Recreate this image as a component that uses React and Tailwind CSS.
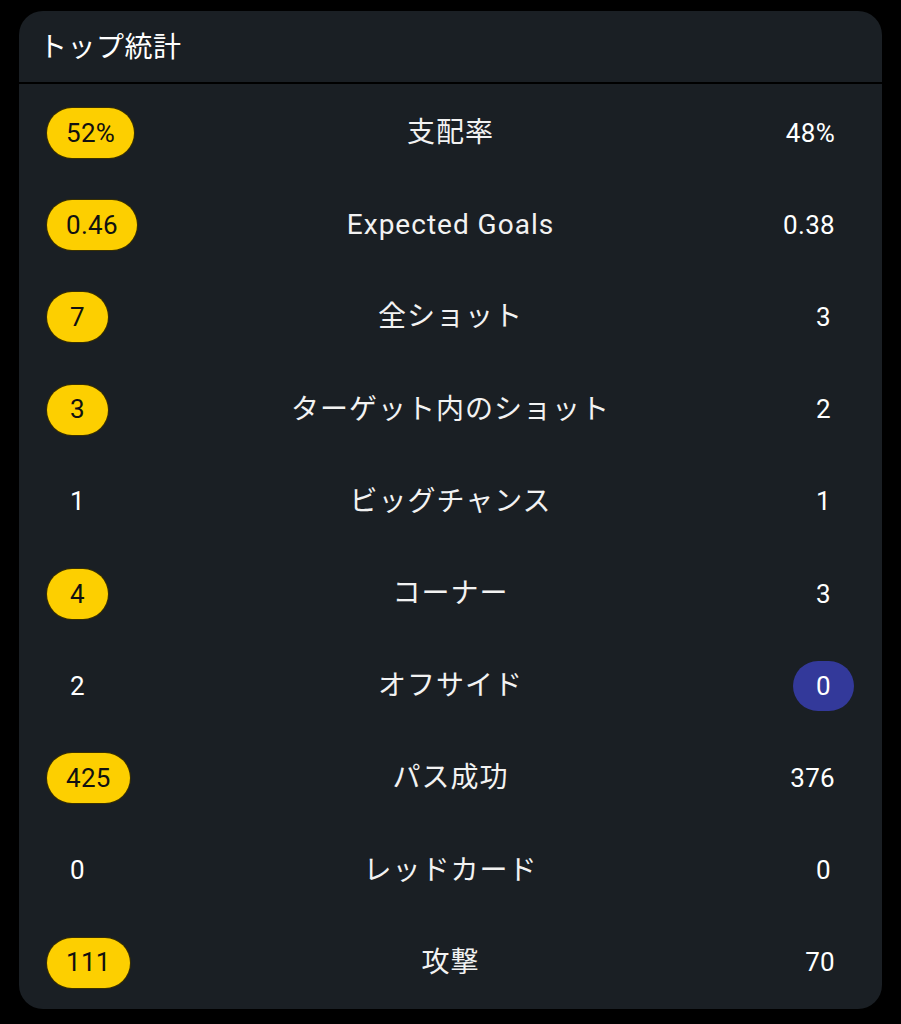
import React from 'react';

const stats = [
  { home: '52%', label: '支配率', away: '48%', win: 'home' },
  { home: '0.46', label: 'Expected Goals', away: '0.38', win: 'home' },
  { home: '7', label: '全ショット', away: '3', win: 'home' },
  { home: '3', label: 'ターゲット内のショット', away: '2', win: 'home' },
  { home: '1', label: 'ビッグチャンス', away: '1', win: null },
  { home: '4', label: 'コーナー', away: '3', win: 'home' },
  { home: '2', label: 'オフサイド', away: '0', win: 'away' },
  { home: '425', label: 'パス成功', away: '376', win: 'home' },
  { home: '0', label: 'レッドカード', away: '0', win: null },
  { home: '111', label: '攻撃', away: '70', win: 'home' },
];

const Value = ({ value, variant }) => {
  let colors = 'text-white';
  if (variant === 'home') colors = 'bg-[#fdcf00] text-[#111] ring-1 ring-[#3a3000]';
  if (variant === 'away') colors = 'bg-[#33399a] text-white';
  return (
    <span
      className={`inline-flex h-[50px] min-w-[61px] items-center justify-center rounded-full px-[19px] text-[26px] tracking-[0.3px] ${colors}`}
    >
      {value}
    </span>
  );
};

export default function App() {
  return (
    <div
      className="min-h-screen bg-black pl-[19px] pt-[11px]"
      style={{ fontFamily: 'Roboto, "Noto Sans CJK JP", sans-serif' }}
    >
      <div className="flex h-[998px] w-[863px] flex-col overflow-hidden rounded-[24px] bg-[#1a1f24]">
        <div className="flex h-[71px] items-center px-[20px] pt-[2px] text-[28px] tracking-[0.5px] text-white">
          トップ統計
        </div>
        <div className="h-[2px] bg-black" />
        <div className="grid flex-1 grid-rows-10 pt-[3px]">
          {stats.map((s) => (
            <div key={s.label} className="grid grid-cols-[1fr_auto_1fr] items-center px-[28px]">
              <div className="flex justify-start">
                <Value value={s.home} variant={s.win === 'home' ? 'home' : null} />
              </div>
              <div className="text-center text-[28px] tracking-[1px] text-[#f2f2f2]">{s.label}</div>
              <div className="flex justify-end">
                <Value value={s.away} variant={s.win === 'away' ? 'away' : null} />
              </div>
            </div>
          ))}
        </div>
      </div>
    </div>
  );
}
